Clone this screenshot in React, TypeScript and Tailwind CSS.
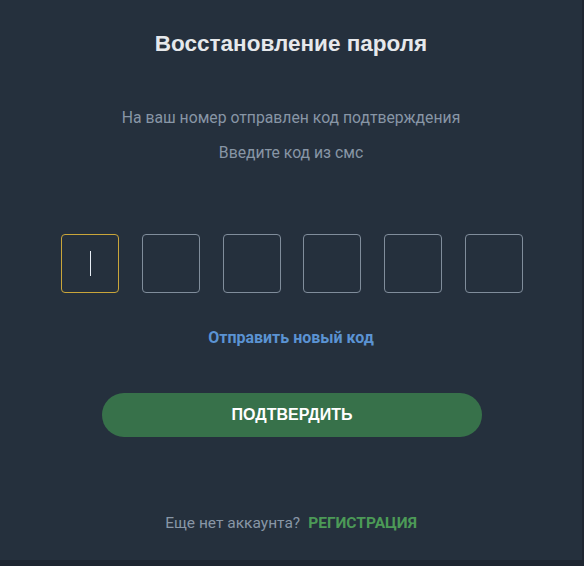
import React from "react";

export default function App() {
  const boxes = [0, 1, 2, 3, 4, 5];
  return (
    <div className="w-[584px] h-[566px] bg-[#1e2631] overflow-hidden">
      <div className="w-[582px] h-[560px] bg-[#25303d] flex flex-col items-center">
        <h1 className="mt-[30px] text-[22.5px] leading-[28px] font-bold text-[#e6e8eb] [font-family:'Liberation_Sans',Arial,sans-serif]">
          Восстановление пароля
        </h1>
        <p className="mt-[50px] text-[15.75px] leading-[20px] text-[#8896a6] [font-family:Roboto,sans-serif]">
          На ваш номер отправлен код подтверждения
        </p>
        <p className="mt-[15px] text-[15.75px] leading-[20px] text-[#8896a6] [font-family:Roboto,sans-serif]">
          Введите код из смс
        </p>
        <div className="mt-[71px] flex gap-[22.8px] ml-[2px]">
          {boxes.map((i) => (
            <div
              key={i}
              className={
                i === 0
                  ? "w-[58px] h-[59px] rounded-[4px] border border-[#c9a53a] flex items-center justify-center"
                  : "w-[58px] h-[59px] rounded-[4px] border border-[#808d9b]"
              }
            >
              {i === 0 && <div className="w-[1px] h-[25px] bg-[#e8eef5]" />}
            </div>
          ))}
        </div>
        <a className="mt-[35px] text-[16px] leading-[20px] font-bold text-[#5b93d3] [font-family:Roboto,sans-serif]">
          Отправить новый код
        </a>
        <button className="mt-[45px] ml-[2px] w-[380px] h-[44px] rounded-full bg-[#37714a] text-white text-[16px] font-bold [font-family:'Liberation_Sans',Arial,sans-serif]">
          ПОДТВЕРДИТЬ
        </button>
        <div className="mt-[76px] flex items-baseline gap-[8px] [font-family:Roboto,sans-serif] text-[15.5px] leading-[20px]">
          <span className="text-[#8896a6]">Еще нет аккаунта?</span>
          <span className="font-bold text-[#4c9a57]">РЕГИСТРАЦИЯ</span>
        </div>
      </div>
    </div>
  );
}
